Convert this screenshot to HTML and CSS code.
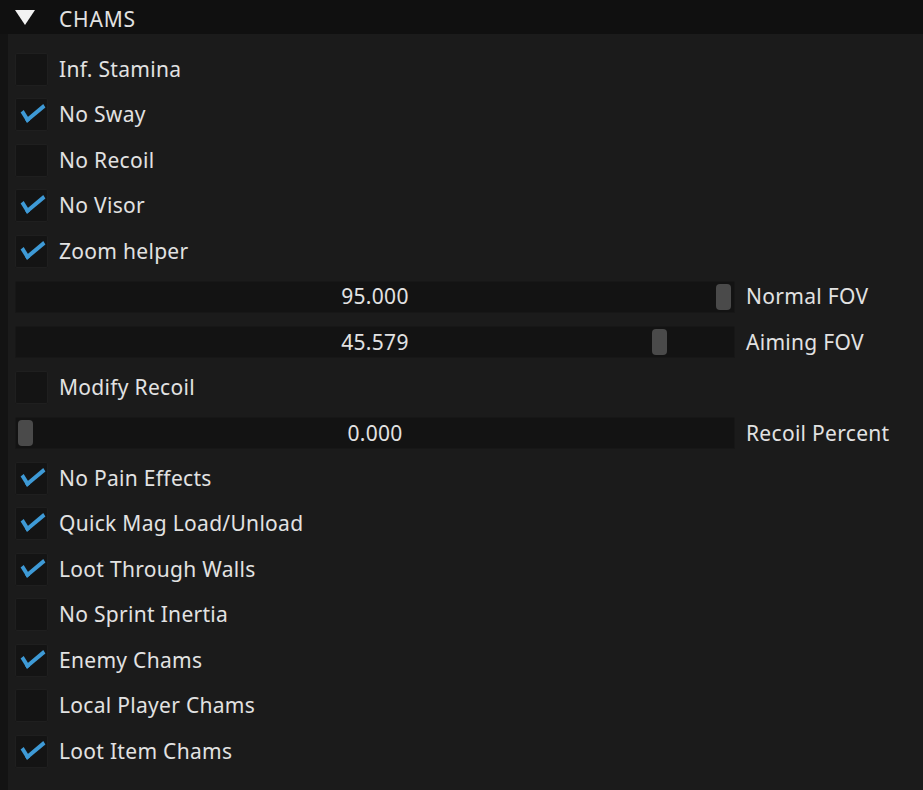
FILE: index.html
```html
<!DOCTYPE html>
<html>
<head>
<meta charset="utf-8">
<title>Chams</title>
<link rel="stylesheet" href="styles.css">
</head>
<body>
	<div class="header">
		<span class="arrow"></span>
		<span class="title">CHAMS</span>
	</div>
	<div class="panel">
		<div class="row"><span class="check"></span><span class="label">Inf. Stamina</span></div>
		<div class="row"><span class="check on"></span><span class="label">No Sway</span></div>
		<div class="row"><span class="check"></span><span class="label">No Recoil</span></div>
		<div class="row"><span class="check on"></span><span class="label">No Visor</span></div>
		<div class="row"><span class="check on"></span><span class="label">Zoom helper</span></div>
		<div class="row">
			<div class="slider"><span class="grab" style="left: 700px"></span><span class="value">95.000</span></div>
			<span class="slabel">Normal FOV</span>
		</div>
		<div class="row">
			<div class="slider"><span class="grab" style="left: 636px"></span><span class="value">45.579</span></div>
			<span class="slabel">Aiming FOV</span>
		</div>
		<div class="row"><span class="check"></span><span class="label">Modify Recoil</span></div>
		<div class="row">
			<div class="slider"><span class="grab" style="left: 2px"></span><span class="value">0.000</span></div>
			<span class="slabel">Recoil Percent</span>
		</div>
		<div class="row"><span class="check on"></span><span class="label">No Pain Effects</span></div>
		<div class="row"><span class="check on"></span><span class="label">Quick Mag Load/Unload</span></div>
		<div class="row"><span class="check on"></span><span class="label">Loot Through Walls</span></div>
		<div class="row"><span class="check"></span><span class="label">No Sprint Inertia</span></div>
		<div class="row"><span class="check on"></span><span class="label">Enemy Chams</span></div>
		<div class="row"><span class="check"></span><span class="label">Local Player Chams</span></div>
		<div class="row"><span class="check on"></span><span class="label">Loot Item Chams</span></div>
	</div>
</body>
</html>
```

FILE: styles.css
```css
html, body {
	margin: 0;
	height: 100%;
	background: #131313;
}

body {
	font-family: "Noto Sans", "Open Sans", sans-serif;
	font-size: 21px;
	letter-spacing: 0.3px;
	color: #e2e2e2;
	overflow: hidden;
}

.header {
	height: 34px;
	background: #101010;
	display: flex;
	align-items: center;
	padding-left: 15px;
}

.arrow {
	width: 0;
	height: 0;
	border-left: 10px solid transparent;
	border-right: 10px solid transparent;
	border-top: 15px solid #f2f2f2;
	margin-top: 1px;
}

.title {
	margin-left: 24px;
	margin-top: 3px;
	letter-spacing: 0.8px;
}

.panel {
	box-sizing: border-box;
	margin-left: 8px;
	background: #1b1b1b;
	height: calc(100% - 34px);
	padding: 19px 0 0 7px;
	display: flex;
	flex-direction: column;
	gap: 12.45px;
}

.row {
	height: 33px;
	display: flex;
	align-items: center;
}

.check {
	width: 31px;
	height: 31px;
	background: #141414;
	border: 1px solid #1f1f1f;
	border-radius: 2px;
	position: relative;
}

.check.on::after {
	content: "";
	position: absolute;
	left: 5px;
	top: 5px;
	width: 20px;
	height: 8px;
	border-left: 4px solid #3e9ad6;
	border-bottom: 4px solid #3e9ad6;
	transform: rotate(-40deg) skewX(-8deg);
	transform-origin: center;
}

.label {
	margin-left: 11px;
	margin-top: -1px;
}

.slider {
	width: 718px;
	height: 30px;
	background: #131313;
	border: 1px solid #171717;
	border-radius: 2px;
	position: relative;
	display: flex;
	align-items: center;
	justify-content: center;
}

.grab {
	position: absolute;
	top: 2px;
	width: 15px;
	height: 26px;
	background: #4a4a4a;
	border-radius: 4px;
}

.value {
	position: relative;
	margin-top: -1px;
}

.slabel {
	margin-left: 11px;
	margin-top: -1px;
}
```
